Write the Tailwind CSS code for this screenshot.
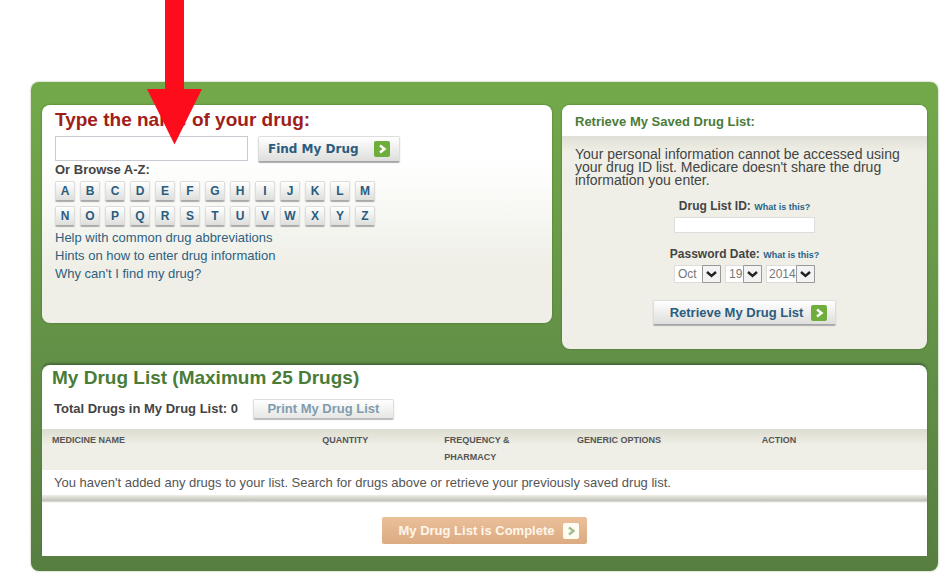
<!DOCTYPE html>
<html lang="en">
<head>
  <meta charset="UTF-8">
  <meta name="viewport" content="width=device-width, initial-scale=1.0">
  <title>My Drug List</title>
  <script src="https://cdn.jsdelivr.net/npm/@tailwindcss/browser@4"></script>
</head>
<body class="relative bg-white pt-[82px] pl-[31px] pr-3 pb-[15px] font-['Liberation_Sans',Arial,sans-serif] text-[#444]">

  <main class="rounded-lg bg-linear-to-b from-[#72a84a] from-5% via-[#649347] via-50% to-[#577e41] px-[11px] pt-[23px] pb-[15px] shadow-[0_0_2px_#8aa878]">

    <div class="grid grid-cols-[510fr_365fr] items-start gap-[10px]">

      <!-- drug search -->
      <section class="min-h-[218px] rounded-lg bg-linear-to-b from-white from-25% to-[#efefe7] to-75% px-[13px] pt-[3px] pb-3 shadow-[0_0_2px_#3f6a2c]">
        <h1 class="text-[19px] leading-6 font-bold text-[#a02018]"><label for="drug">Type the name of your drug:</label></h1>
        <div class="mt-1 flex items-start gap-[10px]">
          <input type="text" id="drug" name="drug" class="h-[25px] w-[193px] border border-[#c8ccd2] bg-white px-1 text-sm">
          <button type="button" class="flex h-[26px] items-center gap-[15px] rounded-xs border border-[#ddd] border-b-[#a5a5a5] bg-linear-to-b from-white to-[#dededc] px-[9px] font-['DejaVu_Sans',Verdana,sans-serif] text-xs font-bold text-[#2a5c7e] shadow-[0_1px_1px_#aaa]">
            Find My Drug
            <svg class="size-4" viewBox="0 0 16 16"><rect width="16" height="16" rx="2" fill="#6fae3c"/><path d="M6 4.500l4.500 3.500L6 11.500" fill="none" stroke="#fff" stroke-width="2.400"/></svg>
          </button>
        </div>
        <h2 class="text-[13px] leading-4 font-bold">Or Browse A-Z:</h2>
        <div id="letters" class="mt-[3px] grid grid-cols-[repeat(13,20px)] gap-[5px]"></div>
        <ul class="mt-[3px] text-[13px] leading-[18px] text-[#2f607e]">
          <li><a href="#">Help with common drug abbreviations</a></li>
          <li><a href="#">Hints on how to enter drug information</a></li>
          <li><a href="#">Why can't I find my drug?</a></li>
        </ul>
      </section>

      <!-- saved list -->
      <section class="min-h-[244px] overflow-hidden rounded-lg bg-[#efefe7] pb-6 shadow-[0_0_2px_#3f6a2c]">
        <h2 class="bg-white px-[13px] pt-[9px] pb-[6px] text-[13px] leading-4 font-bold text-[#4a7c38]">Retrieve My Saved Drug List:</h2>
        <div class="bg-linear-to-b from-[#dfdfd5] to-[#efefe7] to-[16px] px-[13px] pt-3">
          <p class="text-sm leading-[13px]">Your personal information cannot be accessed using your drug ID list. Medicare doesn't share the drug information you enter.</p>
        </div>
        <form class="flex flex-col items-center">
          <div class="mt-[11px] text-xs leading-4 font-bold"><label for="list-id">Drug List ID:</label> <a href="#" class="text-[9px] text-[#2a6388]">What is this?</a></div>
          <input type="text" id="list-id" name="list-id" class="mt-[2px] h-4 w-[141px] border border-[#ddd] bg-white px-1 text-xs">
          <div class="mt-[13px] text-xs leading-4 font-bold"><label for="month">Password Date:</label> <a href="#" class="text-[9px] text-[#2a6388]">What is this?</a></div>
          <div class="mt-[2px] flex gap-1 text-xs text-[#777]">
            <div class="relative">
              <select id="month" name="month" class="block h-[18px] w-[47px] appearance-none border border-[#ddd] bg-white pl-[3px]"><option>Oct</option></select>
              <svg class="pointer-events-none absolute top-0 right-0 h-[18px] w-[19px]" viewBox="0 0 19 18"><path d="M.5.5h18v17H.5z" fill="#f3f3f3" stroke="#999"/><path d="M5 7l4.500 4L14 7" fill="none" stroke="#222" stroke-width="2.400"/></svg>
            </div>
            <div class="relative">
              <select name="day" aria-label="Day" class="block h-[18px] w-[37px] appearance-none border border-[#ddd] bg-white pl-[3px]"><option>19</option></select>
              <svg class="pointer-events-none absolute top-0 right-0 h-[18px] w-[19px]" viewBox="0 0 19 18"><path d="M.5.5h18v17H.5z" fill="#f3f3f3" stroke="#999"/><path d="M5 7l4.500 4L14 7" fill="none" stroke="#222" stroke-width="2.400"/></svg>
            </div>
            <div class="relative">
              <select name="year" aria-label="Year" class="block h-[18px] w-[49px] appearance-none border border-[#ddd] bg-white pl-[2px]"><option>2014</option></select>
              <svg class="pointer-events-none absolute top-0 right-0 h-[18px] w-[19px]" viewBox="0 0 19 18"><path d="M.5.5h18v17H.5z" fill="#f3f3f3" stroke="#999"/><path d="M5 7l4.500 4L14 7" fill="none" stroke="#222" stroke-width="2.400"/></svg>
            </div>
          </div>
          <button type="button" class="mt-[17px] flex h-[25px] items-center gap-2 rounded-xs border border-[#ddd] border-b-[#a5a5a5] bg-linear-to-b from-white to-[#dededc] pr-2 pl-4 text-[13px] font-bold text-[#2a5c7e] shadow-[0_1px_1px_#aaa]">
            Retrieve My Drug List
            <svg class="size-4" viewBox="0 0 16 16"><rect width="16" height="16" rx="2" fill="#6fae3c"/><path d="M6 4.500l4.500 3.500L6 11.500" fill="none" stroke="#fff" stroke-width="2.400"/></svg>
          </button>
        </form>
      </section>
    </div>

    <!-- my list -->
    <section class="mt-4 rounded-t-lg bg-white pb-3 shadow-[0_-2px_2px_#44693a]">
      <h2 class="px-[10px] text-[19px] leading-[26px] font-bold text-[#4a7c38]">My Drug List (Maximum 25 Drugs)</h2>
      <div class="mt-2 flex items-center gap-[15px] pl-3">
        <p class="text-[13px] leading-4 font-bold">Total Drugs in My Drug List: 0</p>
        <button type="button" class="h-5 w-[141px] rounded-xs border border-[#ddd] border-b-[#bbb] bg-linear-to-b from-white to-[#e6e6e4] text-[13px] leading-4 font-bold text-[#7f9caf] shadow-[0_1px_1px_#bbb]">Print My Drug List</button>
      </div>
      <table class="mt-[10px] w-full table-fixed text-left">
        <thead class="bg-linear-to-b from-[#dcdcd0] to-[#efefe7] to-40% align-top text-[9px] leading-[17px] text-[#555]">
          <tr>
            <th class="w-[31%] pt-[3px] pb-1 pl-[10px]">MEDICINE NAME</th>
            <th class="w-[14%] pt-[3px] pb-1 pl-[6px]">QUANTITY</th>
            <th class="w-[15%] pt-[3px] pb-1 pl-1">FREQUENCY &amp;<br>PHARMACY</th>
            <th class="w-[21%] pt-[3px] pb-1 pl-1">GENERIC OPTIONS</th>
            <th class="pt-[3px] pb-1 pl-[3px]">ACTION</th>
          </tr>
        </thead>
        <tbody>
          <tr><td colspan="5" class="h-[25px] pl-3 text-[13px] leading-4 text-[#555]">You haven't added any drugs to your list. Search for drugs above or retrieve your previously saved drug list.</td></tr>
        </tbody>
      </table>
      <div class="h-2 bg-linear-to-b from-[#efefe7] via-[#c2c4bc] via-70% to-white"></div>
      <div class="mt-[14px] flex justify-center">
        <button type="button" class="flex h-[27px] items-center gap-2 rounded-xs bg-linear-to-b from-[#eac09a] to-[#dcab82] pr-2 pl-4 text-[13px] font-bold text-[#fff6ea]">
          My Drug List is Complete
          <svg class="size-4" viewBox="0 0 16 16"><rect width="16" height="16" rx="2" fill="#fffdf2"/><path d="M6 4.500l4.500 3.500L6 11.500" fill="none" stroke="#a3bd93" stroke-width="2.400"/></svg>
        </button>
      </div>
    </section>
  </main>

  <!-- pointer to the search box -->
  <svg class="pointer-events-none absolute top-0 left-[147px] h-[145px] w-14" viewBox="0 0 56 145"><path d="M18 0h19v89h18L27.500 144.500 0 89h18z" fill="#fd0d1b"/></svg>

  <script>
    const letters = document.getElementById('letters');
    for (const letter of 'ABCDEFGHIJKLMNOPQRSTUVWXYZ') {
      const button = document.createElement('button');
      button.type = 'button';
      button.textContent = letter;
      button.className = 'h-5 rounded-xs border border-[#ddd] border-b-[#aaa] bg-linear-to-b from-white to-[#dededc] text-xs leading-4 font-bold text-[#2a5c7e] shadow-[0_1px_1px_#aaa]';
      letters.appendChild(button);
    }
  </script>
</body>
</html>
